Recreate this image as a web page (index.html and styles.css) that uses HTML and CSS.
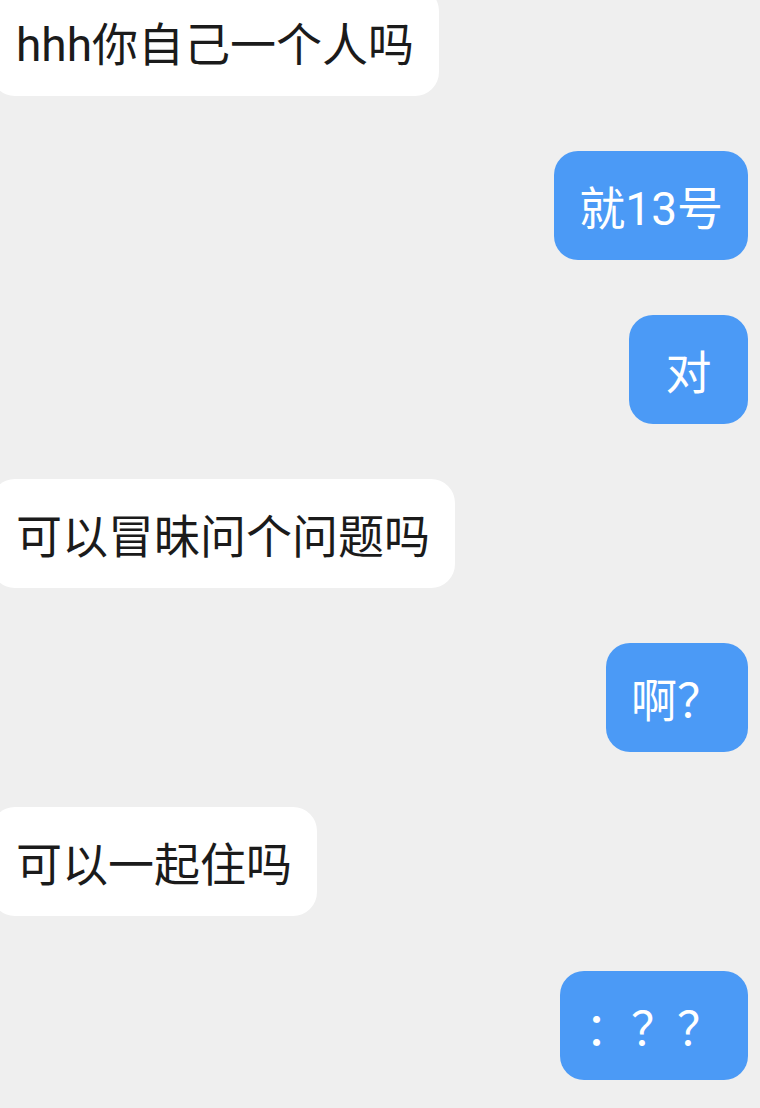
FILE: index.html
```html
<!DOCTYPE html>
<html lang="zh-CN">
<head>
    <meta charset="UTF-8">
    <meta name="viewport" content="width=device-width, initial-scale=1.0">
    <title>聊天</title>
    <link rel="stylesheet" href="styles.css">
</head>
<body>
    <div class="chat">
        <div class="msg left">hhh你自己一个人吗</div>
        <div class="msg right">就13号</div>
        <div class="msg right">对</div>
        <div class="msg left">可以冒昧问个问题吗</div>
        <div class="msg right">啊？</div>
        <div class="msg left">可以一起住吗</div>
        <div class="msg right">：？？</div>
    </div>
</body>
</html>
```

FILE: styles.css
```css
body {
    margin: 0;
    background-color: #efefef;
    font-family: Roboto, "Noto Sans CJK SC", sans-serif;
    overflow: hidden;
}
.chat {
    display: flex;
    flex-direction: column;
    gap: 55px;
    margin-top: -13px;
    padding-right: 12px;
}
.msg {
    box-sizing: border-box;
    min-width: 119px;
    padding: 28px 25px 20px;
    border-radius: 24px;
    font-size: 46px;
    line-height: 61px;
    text-align: center;
    white-space: nowrap;
}
.left {
    align-self: flex-start;
    margin-left: -9px;
    background-color: #ffffff;
    color: #1b1b1b;
}
.right {
    align-self: flex-end;
    background-color: #4b9af6;
    color: #ffffff;
}
```
